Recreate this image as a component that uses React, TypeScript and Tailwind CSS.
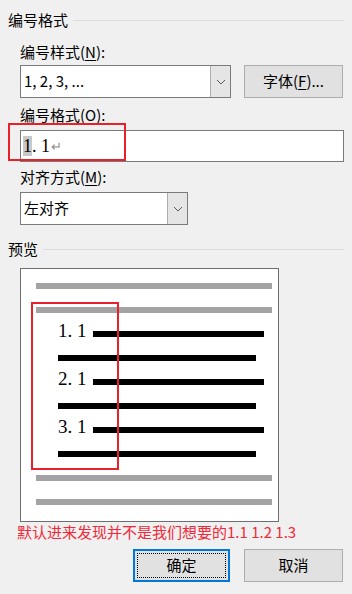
const cjk = { fontFamily: '"Noto Sans CJK SC", "Noto Sans", sans-serif' };
const serif = { fontFamily: '"Liberation Serif", "DejaVu Serif", serif' };

const Chevron = () => (
  <svg width="10" height="6" viewBox="0 0 10 6" fill="none">
    <path d="M1 1l4 4 4-4" stroke="#5a5a5a" strokeWidth="1" />
  </svg>
);

const GroupHeader = ({ title }: { title: string }) => (
  <div className="flex items-center h-[20px] pl-[8px] pr-[8px]">
    <span className="text-[15px] leading-[20px] text-black whitespace-nowrap">{title}</span>
    <div className="flex-1 h-px bg-[#dcdcdc] ml-[5px]" />
  </div>
);

const Label = ({ text, hot, className = '' }: { text: string; hot: string; className?: string }) => (
  <div className={`pl-[20px] text-[15px] leading-[20px] text-black ${className}`}>
    {text}(<span className="underline underline-offset-2">{hot}</span>):
  </div>
);

const Combo = ({ value, width }: { value: string; width: string }) => (
  <div className={`flex h-[33px] border border-[#7a7a7a] bg-white ${width}`}>
    <div className="flex-1 flex items-center pl-[3px] text-[15px] text-black">{value}</div>
    <div className="w-[20px] flex items-center justify-center bg-[#e5e5e5] border-l border-[#adadad]">
      <Chevron />
    </div>
  </div>
);

const Gap = ({ first }: { first?: boolean }) => (
  <div className={first ? 'h-[14px]' : 'h-[18px]'} />
);

export default function App() {
  const bar = (kind: 'gray' | 'black' | 'num', num?: string) => {
    if (kind === 'gray') return <div className="h-[6px] w-[236px] ml-[15px] bg-[#a3a3a3]" />;
    if (kind === 'black') return <div className="h-[6px] w-[198px] ml-[37px] bg-black" />;
    return (
      <div className="flex items-end h-[6px] ml-[37px]">
        <span
          className="w-[35px] text-[19px] leading-[14px] text-black whitespace-pre translate-y-[1px]"
          style={serif}
        >
          {num}
        </span>
        <div className="h-[6px] w-[171px] bg-black" />
      </div>
    );
  };

  return (
    <div className="relative w-[352px] h-[594px] bg-[#f0f0f0] overflow-hidden" style={cjk}>
      <div className="pt-[10px]">
        <GroupHeader title="编号格式" />

        <Label text="编号样式" hot="N" className="mt-[12px]" />
        <div className="flex mt-[3px] pl-[20px] gap-[13px]">
          <Combo value="1, 2, 3, ..." width="w-[211px]" />
          <button className="w-[99px] h-[33px] bg-[#e1e1e1] border border-[#adadad] text-[15px] text-black">
            字体(<span className="underline underline-offset-2">F</span>)...
          </button>
        </div>

        <Label text="编号格式" hot="O" className="mt-[7px]" />
        <div className="ml-[20px] mt-[5px] w-[324px] h-[32px] border border-[#7a7a7a] bg-white flex items-center pl-[2px]">
          <span className="text-[18px] leading-[22px] text-black whitespace-pre" style={serif}>
            <span className="bg-[#c8c8c8]">1</span>. 1
          </span>
          <span className="text-[13px] text-[#8a8a8a] ml-[1px]">↵</span>
        </div>

        <Label text="对齐方式" hot="M" className="mt-[5px]" />
        <div className="pl-[20px] mt-[5px]">
          <Combo value="左对齐" width="w-[168px]" />
        </div>

        <div className="mt-[14px]">
          <GroupHeader title="预览" />
        </div>

        <div className="relative ml-[20px] mt-[9px] w-[259px] h-[254px] border border-[#6e6e6e] bg-white flex flex-col">
          <Gap first />
          {bar('gray')}
          <Gap />
          {bar('gray')}
          <Gap />
          {bar('num', '1. 1')}
          <Gap />
          {bar('black')}
          <Gap />
          {bar('num', '2. 1')}
          <Gap />
          {bar('black')}
          <Gap />
          {bar('num', '3. 1')}
          <Gap />
          {bar('black')}
          <Gap />
          {bar('gray')}
          <Gap />
          {bar('gray')}
          <div className="absolute left-[10px] top-[33px] w-[88px] h-[168px] border-2 border-[#e8202a]" />
        </div>

        <div className="pl-[17px] text-[15px] leading-[20px] text-[#f0283a] whitespace-nowrap">
          默认进来发现并不是我们想要的1.1 1.2 1.3
        </div>

        <div className="flex justify-end gap-[14px] mt-[7px] pr-[9px]">
          <button className="w-[97px] h-[33px] bg-[#e1e1e1] border-2 border-[#0078d7] p-[2px] text-[15px] text-black">
            <div className="w-full h-full border border-dotted border-black flex items-center justify-center">
              确定
            </div>
          </button>
          <button className="w-[99px] h-[33px] bg-[#e1e1e1] border border-[#adadad] text-[15px] text-black">
            取消
          </button>
        </div>
      </div>

      <div className="absolute left-[8px] top-[123px] w-[118px] h-[38px] border-2 border-[#e8202a]" />
    </div>
  );
}
